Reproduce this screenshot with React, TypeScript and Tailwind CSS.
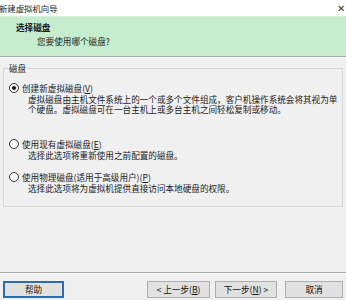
import React from "react";

const font = { fontFamily: '"Noto Sans CJK SC", "Noto Sans", sans-serif' };

function Radio({ checked }: { checked?: boolean }) {
  return (
    <span className="inline-flex w-[10px] h-[10px] rounded-full border border-[#333] bg-white items-center justify-center shrink-0">
      {checked && <span className="w-[4px] h-[4px] rounded-full bg-[#111]" />}
    </span>
  );
}

function Btn({ children, primary }: { children: React.ReactNode; primary?: boolean }) {
  return (
    <div
      className={`h-[17px] flex items-center justify-center text-[8.6px] leading-none text-[#111] bg-[#e1e1e1] whitespace-nowrap ${
        primary ? "border-[2px] border-[#2b6cb0]" : "border border-[#adadad]"
      }`}
    >
      <span>{children}</span>
    </div>
  );
}

export default function App() {
  return (
    <div className="w-[346px] h-[300px] bg-[#f0f0f0] flex flex-col overflow-hidden text-[#1a1a1a]" style={font}>
      <div className="h-[16px] shrink-0 bg-white flex items-center justify-between pr-[1px]">
        <span className="text-[8.4px] leading-none -ml-[1px]">新建虚拟机向导</span>
        <span className="text-[10px] leading-none text-[#333]">✕</span>
      </div>
      <div className="h-[40px] shrink-0 bg-[#c6ecce] border-t border-[#d6f0dc] flex flex-col pl-[16px] pt-[5px]">
        <span className="text-[8.6px] leading-[10px] font-bold">选择磁盘</span>
        <span className="text-[8.6px] leading-[10px] pl-[21px] mt-[4px]">您要使用哪个磁盘?</span>
      </div>
      <div className="h-[1px] shrink-0 bg-[#a8a8a8]" />
      <div className="h-[1px] shrink-0 bg-white" />
      <div className="flex-1 flex flex-col px-[3px] pt-[10px]">
        <div className="border border-[#d8d8d8] h-[139px] relative pl-[5px] pt-[14px]">
          <span className="absolute -top-[6px] left-[4px] px-[1px] bg-[#f0f0f0] text-[8.6px] leading-[10px]">磁盘</span>
          <div className="flex items-center gap-[3px] h-[10px]">
            <Radio checked />
            <span className="text-[8.6px] leading-[10px]">创建新虚拟磁盘(<u>V</u>)</span>
          </div>
          <div className="pl-[19px] text-[8.6px] leading-[10px] mt-[1px] whitespace-nowrap">
            <div>虚拟磁盘由主机文件系统上的一个或多个文件组成，客户机操作系统会将其视为单</div>
            <div>个硬盘。虚拟磁盘可在一台主机上或多台主机之间轻松复制或移动。</div>
          </div>
          <div className="flex items-center gap-[3px] h-[10px] mt-[25px]">
            <Radio />
            <span className="text-[8.6px] leading-[10px]">使用现有虚拟磁盘(<u>E</u>)</span>
          </div>
          <div className="pl-[19px] text-[8.6px] leading-[10px] mt-[1px] whitespace-nowrap">
            <div>选择此选项将重新使用之前配置的磁盘。</div>
          </div>
          <div className="flex items-center gap-[3px] h-[10px] mt-[12px]">
            <Radio />
            <span className="text-[8.6px] leading-[10px]">使用物理磁盘(适用于高级用户)(<u>P</u>)</span>
          </div>
          <div className="pl-[19px] text-[8.6px] leading-[10px] mt-[1px] whitespace-nowrap">
            <div>选择此选项将为虚拟机提供直接访问本地硬盘的权限。</div>
          </div>
        </div>
        <div className="flex-1" />
      </div>
      <div className="h-[1px] shrink-0 bg-[#a8a8a8]" />
      <div className="h-[1px] shrink-0 bg-white" />
      <div className="h-[26px] shrink-0 flex items-start px-[3px] pt-[7px]">
        <div className="w-[61px]"><Btn primary>帮助</Btn></div>
        <div className="flex-1" />
        <div className="w-[63px]"><Btn>&lt; 上一步(<u>B</u>)</Btn></div>
        <div className="w-[62px] ml-[5px]"><Btn>下一步(<u>N</u>) &gt;</Btn></div>
        <div className="w-[58px] ml-[8px]"><Btn>取消</Btn></div>
      </div>
    </div>
  );
}
